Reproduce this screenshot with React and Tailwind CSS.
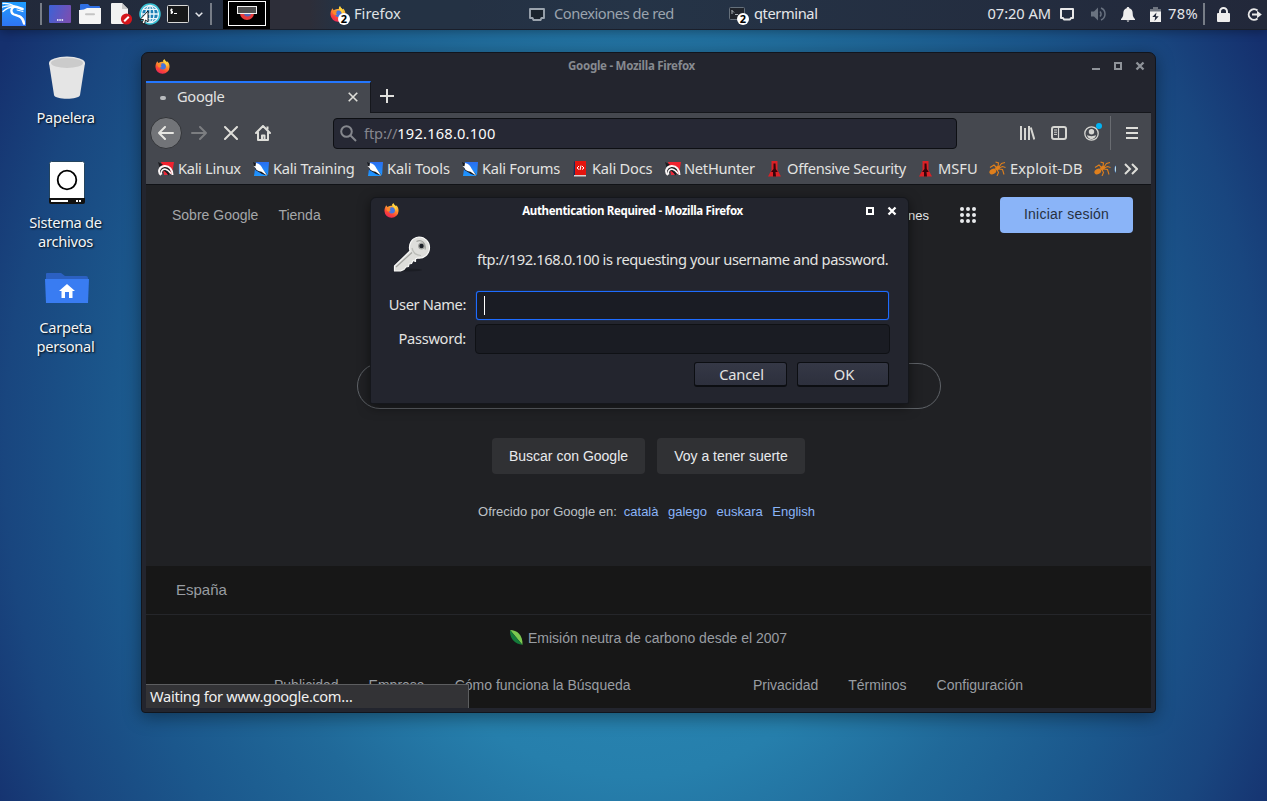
import React from "react";

const ui = "font-['Noto_Sans',sans-serif] text-[14.67px] leading-5 whitespace-nowrap";

function FirefoxIcon({ className }) {
  return (
    <svg viewBox="0 0 16 16" className={`shrink-0 ${className}`}>
      <defs>
        <linearGradient id="fxBody" x1="0.8" y1="0" x2="0.3" y2="1">
          <stop offset="0" stopColor="#ffe04a" />
          <stop offset="0.4" stopColor="#ff9a2e" />
          <stop offset="0.75" stopColor="#fb4238" />
          <stop offset="1" stopColor="#e8275c" />
        </linearGradient>
      </defs>
      <path d="M1.300 4.500 2.300 2.300 3.600 4.200C5 3.400 7 3 9 3 8.600 1.800 9.200.8 10.200.2c.2 1.500 1.700 2 2.500 3.300.4-.1.5-.6.5-1 1.600 1.600 2.400 3.800 2.300 6A7.300 7.300 0 0 1 8 15.700 7.400 7.400 0 0 1 .5 8.800C.4 7 .8 5.500 1.300 4.500z" fill="url(#fxBody)" />
      <path d="M5 6C6 5.500 6.500 4.800 8 4.600c2.300-.3 3.700 1.300 3.700 3.400 0 2-1.500 3.300-3.500 3.200C6 11.200 4.600 9.300 5 6z" fill="#4575df" />
      <path d="M2.600 5.500 7 5.300 6 7.600 7.400 8.400 5.200 9C3.400 8.700 2.600 7.400 2.600 5.500z" fill="#ff8a28" />
      <path d="M10 .2c.3 1.500 1.800 2 2.600 3.500.9 1.700.8 3.500.2 4.900C12 6 10.600 4.600 9 3 8.600 1.800 9.100.8 10 .2z" fill="#ffd53e" />
    </svg>
  );
}

function KaliMenuIcon() {
  return (
    <svg className="ml-[2px] shrink-0" width="24" height="24" viewBox="0 0 24 24">
      <defs>
        <linearGradient id="kaliBg" x1="0" y1="0" x2="0" y2="1">
          <stop offset="0" stopColor="#1f9dff" />
          <stop offset="1" stopColor="#2f74f2" />
        </linearGradient>
      </defs>
      <rect width="24" height="24" fill="url(#kaliBg)" />
      <g fill="none" stroke="#fff" strokeLinecap="round">
        <path d="M1 1.500c4-.2 8 .5 11.500 3" strokeWidth="1.300" />
        <path d="M.5 5c4-1.300 8-1.500 11.500-.5" strokeWidth="1.300" />
        <path d="M1 9.500C4 6.500 8 5 12 5" strokeWidth="1.300" />
        <path d="M12 4.500c3 .3 5.500 1.500 8.500 2.500" strokeWidth="2.600" />
        <path d="M15 8l6 1.500" strokeWidth="1" />
        <path d="M12 5C8.500 6.500 8.500 11 12 12.500c4 1.500 8.500 1.500 10 9" strokeWidth="2.300" />
        <path d="M17 13.500c4 1 5.500 4 5.500 8.500" strokeWidth="1" />
      </g>
    </svg>
  );
}

function WindowButtons({ color, minimize }) {
  return (
    <svg width="54" height="12" viewBox="0 0 54 12" fill="none" stroke={color} strokeWidth="2" shapeRendering="crispEdges">
      {minimize && <path d="M0 9h8" />}
      <path d="M23 3h6v6h-6z" />
      <path d="M44.500 2.500l7 7M51.500 2.500l-7 7" shapeRendering="auto" strokeWidth="2.300" />
    </svg>
  );
}

function Badge() {
  return (
    <span className="absolute top-[7px] left-[8px] flex h-3 w-3 items-center justify-center rounded-full bg-white font-['Noto_Sans',sans-serif] text-[11px] leading-3 font-bold tracking-normal text-black">
      2
    </span>
  );
}

function Separator({ className }) {
  return <span className={`h-[22px] w-[2px] shrink-0 bg-[#777d87] ${className}`} />;
}

function Panel() {
  return (
    <header className={`relative flex h-[30px] items-center border-b border-[#1a1f2b] bg-linear-to-r from-[#22293a] via-[#253447] to-[#22283a] pb-px text-[#e4e6ea] shadow-[0_2px_10px_rgba(0,0,0,.3)] ${ui}`}>
      <KaliMenuIcon />
      <Separator className="ml-[14px]" />
      <svg className="ml-[7px] shrink-0" width="22" height="18" viewBox="0 0 22 18">
        <defs>
          <linearGradient id="desk" x1="0" y1="0" x2="1" y2="0.3">
            <stop offset="0" stopColor="#3c62d6" />
            <stop offset="1" stopColor="#7650b4" />
          </linearGradient>
        </defs>
        <rect width="22" height="18" rx="1" fill="url(#desk)" />
        <path d="M8 15h1.500M10.300 15h1.500M12.600 15h1.500" stroke="#fff" strokeWidth="1.300" />
      </svg>
      <svg className="ml-2 shrink-0" width="22" height="20" viewBox="0 0 22 20">
        <path d="M1 1q0-1 1-1h7l2 2h9q1 0 1 1v4H1z" fill="#2f6fe4" />
        <path d="M0 6q5 .3 8-2h14v15q0 1-1 1H1q-1 0-1-1z" fill="#f4f4f4" />
        <path d="M7 10.300h8" stroke="#c4c4c4" strokeWidth="2" strokeLinecap="round" />
      </svg>
      <svg className="ml-[10px] shrink-0" width="22" height="22" viewBox="0 0 22 22">
        <path d="M0 1q0-1 1-1h10l6 6v14q0 1-1 1H1q-1 0-1-1z" fill="#f2f2f2" />
        <path d="M11 0l6 6h-6z" fill="#c9c9c9" />
        <circle cx="15.500" cy="16" r="5.600" fill="#d4161c" />
        <path d="M13.200 18.300l4.600-4.600" stroke="#fff" strokeWidth="2" />
      </svg>
      <svg className="ml-[6px] shrink-0" width="22" height="22" viewBox="0 0 22 22">
        <circle cx="11" cy="11" r="10" fill="#1c7eb5" stroke="#38c6d8" strokeWidth="1.500" />
        <g fill="none" stroke="#e8f6fa" strokeWidth="1.300">
          <circle cx="11" cy="11" r="8.500" />
          <ellipse cx="11" cy="11" rx="4" ry="8.500" />
          <path d="M11 2v18M2.500 11h17M4 6.300h14M4 15.700h14" />
        </g>
        <path d="M9 8v11l-2.500-2-1 4-2.500-1 1.500-3.500H1z" fill="#fff" stroke="#111" strokeWidth=".9" />
      </svg>
      <svg className="ml-[6px] shrink-0" width="22" height="18" viewBox="0 0 22 18">
        <rect x=".5" y=".5" width="21" height="17" rx="1" fill="#171819" stroke="#d8d8d8" />
        <path d="M5.500 4.500H3.800v1.700h1.700v1.800H3.500M4.600 3.500v5.500M7 8.500h3" stroke="#fff" fill="none" />
      </svg>
      <svg className="ml-[6px] shrink-0" width="8" height="5" viewBox="0 0 8 5" fill="none" stroke="#e4e6ea" strokeWidth="1.500">
        <path d="M.7.700 4 4 7.300.700" />
      </svg>
      <Separator className="ml-[7px]" />
      <span className="ml-[11px] flex h-[29px] w-[47px] shrink-0 items-start justify-center bg-black pt-px">
        <svg width="38" height="25" viewBox="0 0 38 25">
          <rect x=".5" y=".5" width="37" height="24" fill="#000" stroke="#fff" />
          <path d="M12 12h14a7 7 0 0 1-14 0z" fill="#e83b3c" />
          <path d="M16 12h7a3.500 3.500 0 0 1-7 0z" fill="#5665b5" />
          <rect x="9.500" y="5.500" width="19" height="7" fill="#505050" stroke="#f1f1f1" />
        </svg>
      </span>
      <div className="flex h-[29px] w-[200px] shrink-0 items-center bg-linear-to-r from-[#2d2e39] from-20% to-[#243244] to-35% pl-[60px] text-[#dfe2e5]">
        <span className="relative h-4 w-4 shrink-0">
          <FirefoxIcon className="h-4 w-4" />
          <Badge />
        </span>
        <span className="-mt-[2px] ml-2">Firefox</span>
      </div>
      <div className="flex w-[200px] shrink-0 items-center pl-[59px] text-[#9ba4ae]">
        <svg className="shrink-0" width="16" height="13" viewBox="0 0 16 13">
          <path d="M1 1h14v9h-2.500l-1 2h-7l-1-2H1z" fill="#1a232d" stroke="#9ba4ae" strokeWidth="1.900" strokeLinejoin="round" />
        </svg>
        <span className="-mt-[2px] ml-[9px] tracking-[-0.47px]">Conexiones de red</span>
      </div>
      <div className="flex shrink-0 items-center pl-[59px]">
        <span className="relative h-4 w-4 shrink-0">
          <svg width="16" height="13" viewBox="0 0 16 13" className="mt-px">
            <rect x=".5" y=".5" width="15" height="12" rx="1" fill="#20242b" stroke="#66717c" />
            <path d="M3 3v4M3 3.500l2 2M6 7.500h3" stroke="#a9b0b6" fill="none" />
          </svg>
          <Badge />
        </span>
        <span className="-mt-[2px] ml-[9px] tracking-[-0.4px]">qterminal</span>
      </div>
      <div className="ml-auto flex shrink-0 items-center pr-[5px]">
        <span className="-mt-[2px] tracking-[-0.05px]">07:20 AM</span>
        <svg className="ml-[9px]" width="14" height="13" viewBox="0 0 14 13" fill="none" stroke="#e8e8e8" strokeWidth="2" strokeLinejoin="round">
          <path d="M1 1h12v9h-2l-1 1.500H4L3 10H1z" />
        </svg>
        <svg className="ml-[17px]" width="16" height="14" viewBox="0 0 16 14" fill="none" stroke="#697280" strokeWidth="1.500">
          <path d="M0 4.500h3L7 .5v13L3 9.500H0z" fill="#697280" stroke="none" />
          <path d="M9 4.500a3.500 3.500 0 0 1 0 5M10 1a6.500 6.500 0 0 1 0 12" />
        </svg>
        <svg className="ml-[14px]" width="14" height="15" viewBox="0 0 14 15" fill="#eee">
          <path d="M7 0c1 0 1.300.6 1.300 1.300C11 2 11.700 4 11.700 6.500c0 3 .8 4 2.300 5.500v1H0v-1c1.500-1.500 2.300-2.500 2.300-5.500C2.300 4 3 2 5.700 1.300 5.700.6 6 0 7 0zM5.500 13.500h3L7 15z" />
        </svg>
        <svg className="ml-[14px]" width="13" height="15" viewBox="0 0 13 15">
          <path d="M1 2h3V0h5v2h3v4H1z" fill="#6f7580" />
          <path d="M1 4.500h11V15H1z" fill="#f0f0f0" />
          <path d="M7.500 5.500 3.300 10h2.900L5.500 14l4.200-4.700H6.800z" fill="#22293a" />
        </svg>
        <span className="-mt-[2px] ml-[6px] tracking-[0.35px]">78%</span>
        <Separator className="ml-[5px]" />
        <svg className="ml-[12px]" width="13" height="15" viewBox="0 0 13 15">
          <path d="M3 7V4.500a3.500 3.500 0 0 1 7 0V7" fill="none" stroke="#eee" strokeWidth="2" />
          <rect y="6" width="13" height="9" rx="1" fill="#eee" />
        </svg>
        <svg className="ml-[17px]" width="15" height="13" viewBox="0 0 15 13" fill="none" stroke="#e8e8e8" strokeWidth="2">
          <path d="M10.500 2.500A5.300 5.300 0 1 0 10.500 10.500M5 6.500h6" />
          <path d="M10 2.800 14.800 6.500 10 10.200z" fill="#e8e8e8" stroke="none" />
        </svg>
      </div>
    </header>
  );
}

function DesktopIcon({ className, children, label }) {
  return (
    <div className={`absolute left-[15px] flex w-[101px] flex-col items-center text-center tracking-[-0.27px] text-[#f3f6f8] [text-shadow:1px_1px_2px_rgba(0,0,0,.9)] ${ui} ${className}`}>
      {children}
      <span className="mt-[9px] leading-[19px] whitespace-pre-line">{label}</span>
    </div>
  );
}

function KaliMark({ red }) {
  return red ? (
    <svg width="16" height="14" viewBox="0 0 16 14">
      <path d="M3 0h13l-2 12H6z" fill="#f0222f" />
      <path d="M0 0l5 2.500L1.500 5z" fill="#1c1c20" />
      <path d="M2.500 8.500C3 5 7.500 3.500 10.500 5.500c3 2 2.500 6-.5 8-.8-2.200-2.300-3.700-4.500-4.500L3 13.500C.8 12.500 0 10.500 2.500 8.500z" fill="#1c1c20" />
      <path d="M6 9l4 4H6z" fill="#e8283a" />
      <path d="M3 13C-.5 10 1 4.500 6.500 4c5-.3 8 3.500 8 9" fill="none" stroke="#faf6f6" strokeWidth="2" />
      <path d="M3.500 12.500C2.500 9 4.500 6.800 7.500 7.200c2.500.4 4 2.300 5.500 4.300" fill="none" stroke="#faf6f6" strokeWidth="1.600" />
    </svg>
  ) : (
    <svg width="16" height="14" viewBox="0 0 16 14">
      <defs>
        <linearGradient id="kaliBlue" x1="0" y1="0" x2="0" y2="1">
          <stop offset="0" stopColor="#2a6ff0" />
          <stop offset="1" stopColor="#1d97ff" />
        </linearGradient>
      </defs>
      <path d="M3 0h13l-1 14H1z" fill="url(#kaliBlue)" />
      <path d="M0 0l5 2.500 5 5.500 5.500 6L9 12 2.500 8z" fill="#15171d" />
      <path d="M3 1c3.500.8 5.500 3 6.500 5.500L14.500 14 8.500 9.800C5.500 9.500 3 8 2.500 6L.5 4l2 .3z" fill="#fff" />
    </svg>
  );
}

function DocsMark() {
  return (
    <svg width="13" height="16" viewBox="0 0 13 16">
      <path d="M1 .500h3V15H.500z" fill="#172b5b" />
      <rect x="2" width="11" height="14" fill="#e3140e" />
      <path d="M1 14h12v1.500H1z" fill="#d8d0d0" />
      <path d="M6 5 4 7l2 1.500M9 5l2 2-2 1.500M8 4.500 7 9" stroke="#fff" fill="none" />
    </svg>
  );
}

function OffsecMark() {
  return (
    <svg width="13" height="16" viewBox="0 0 13 16">
      <path d="M3.500 0h6v9l3.500 6.500H0L3.500 9z" fill="#dc2026" />
      <path d="M5.500 2.500h2L7.800 8l2 3H7.500L8 15.500H5V11H3l2.500-3z" fill="#35040a" />
    </svg>
  );
}

function AntMark() {
  return (
    <svg width="17" height="15" viewBox="0 0 17 15" fill="none" stroke="#df7f1c" strokeWidth="1.100">
      <ellipse cx="3.800" cy="10.500" rx="3.600" ry="2.600" fill="#df7f1c" stroke="none" transform="rotate(-30 3.800 10.500)" />
      <ellipse cx="8.500" cy="7" rx="2.600" ry="1.900" fill="#df7f1c" stroke="none" transform="rotate(-30 8.500 7)" />
      <path d="M7 6 5 4 1 6.500M9 5.500 9.500 2 6.500 1M10 6l2.500-3.500L16 1.500M10 7l3.500-1.500 3 1M9.500 8l4 .500 1.500 5M8 8.500l1.500 3L8 15" />
    </svg>
  );
}

const bookmarks = [
  { label: "Kali Linux", icon: <KaliMark red />, box: "w-[95px]", slot: "w-[20px]", track: "tracking-[-0.32px]" },
  { label: "Kali Training", icon: <KaliMark />, box: "w-[114px]", slot: "w-[20px]", track: "tracking-[-0.25px]" },
  { label: "Kali Tools", icon: <KaliMark />, box: "w-[95px]", slot: "w-[20px]", track: "tracking-[-0.15px]" },
  { label: "Kali Forums", icon: <KaliMark />, box: "w-[111px]", slot: "w-[20px]", track: "tracking-[-0.27px]" },
  { label: "Kali Docs", icon: <DocsMark />, box: "w-[92px]", slot: "w-[19px]", track: "tracking-[-0.22px]" },
  { label: "NetHunter", icon: <KaliMark red />, box: "w-[103px]", slot: "w-[19px]", track: "tracking-[-0.27px]" },
  { label: "Offensive Security", icon: <OffsecMark />, box: "w-[151px]", slot: "w-[19px]", track: "tracking-[-0.29px]" },
  { label: "MSFU", icon: <OffsecMark />, box: "w-[70px]", slot: "w-[19px]", track: "tracking-normal" },
  { label: "Exploit-DB", icon: <AntMark />, box: "w-[105px]", slot: "w-[21px]", track: "tracking-[0.1px]" },
  { label: "GHDB", icon: <AntMark />, box: "w-[22px]", slot: "w-[20px]", track: "tracking-normal" },
];

function BrowserChrome() {
  return (
    <>
      <div className="flex h-[28px] items-center pr-[9px] pb-[2px] pl-[13px]">
        <FirefoxIcon className="h-[15px] w-[15px]" />
        <span className="w-[923px] text-center font-['Noto_Sans',sans-serif] text-[11.5px] leading-4 font-bold tracking-[-0.26px] text-[#868a90]">
          Google - Mozilla Firefox
        </span>
        <span className="-ml-5 grow" />
        <WindowButtons color="#8f9399" minimize />
      </div>
      <div className="mx-[4px] flex h-[32px] border-b border-[#15171c]">
        <div className={`-mb-px flex h-[32px] w-[225px] items-center border-t-2 border-r border-t-[#2477ff] border-r-[#15171c] bg-[#45484f] pb-px pl-[14px] text-[#e2e2e2] ${ui}`}>
          <span className="h-1 w-[6px] rounded-full bg-[#b9bbbe]" />
          <span className="-mt-[3px] ml-[11px] tracking-[-0.33px]">Google</span>
          <svg className="-mt-px mr-[12px] ml-auto" width="10" height="10" viewBox="0 0 11 11" stroke="#deded9" strokeWidth="1.800">
            <path d="M.8.800l9.400 9.400M10.200.800.800 10.200" />
          </svg>
        </div>
        <svg className="mt-[8px] ml-[9px]" width="14" height="14" viewBox="0 0 14 14" stroke="#e0e0dd" strokeWidth="2">
          <path d="M7 0v14M0 7h14" />
        </svg>
      </div>
      <div className="mx-[4px] flex h-[72px] flex-col border-b border-[#101216] bg-[#45484f]">
        <div className="flex h-[40px] items-center pl-[4px]">
          <span className="flex h-8 w-8 items-center justify-center rounded-full border border-[#333539] bg-[#727478]">
            <svg width="16" height="14" viewBox="0 0 16 14" fill="none" stroke="#e6e6e2" strokeWidth="2" strokeLinecap="round" strokeLinejoin="round">
              <path d="M15 7H1M7 1 1 7l6 6" />
            </svg>
          </span>
          <svg className="ml-[9px]" width="16" height="14" viewBox="0 0 16 14" fill="none" stroke="#7c7e81" strokeWidth="2" strokeLinecap="round" strokeLinejoin="round">
            <path d="M1 7h14M9 1l6 6-6 6" />
          </svg>
          <svg className="ml-[17px]" width="14" height="14" viewBox="0 0 14 14" stroke="#deded9" strokeWidth="2" strokeLinecap="round">
            <path d="M1 1l12 12M13 1 1 13" />
          </svg>
          <svg className="ml-[17px]" width="16" height="16" viewBox="0 0 16 16" fill="none" stroke="#deded9" strokeWidth="2" strokeLinejoin="round">
            <path d="M1 8l7-7 7 7M3 7.500V15h10V7.500M7 15v-4.500h2.500V15" strokeLinecap="round" />
            <path d="M12.500 1.500v3" />
          </svg>
          <div className={`ml-[62px] flex h-[31px] w-[624px] items-center rounded-[4px] border border-[#0d0f13] bg-[#262834] pl-[6px] text-[#fbfbfb] ${ui}`}>
            <svg width="17" height="17" viewBox="0 0 17 17" fill="none" stroke="#85878d" strokeWidth="2">
              <circle cx="6.500" cy="6.500" r="5.300" />
              <path d="M10.500 10.500l5.500 5.500" />
            </svg>
            <span className="ml-[7px] tracking-[0.2px]"><span className="tracking-[-0.15px] text-[#85868e]">ftp://</span>192.168.0.100</span>
          </div>
          <svg className="ml-[63px]" width="15" height="14" viewBox="0 0 15 14" fill="none" stroke="#d6d6d2" strokeWidth="2">
            <path d="M1 0v14M5 2v12M9 0v14" />
            <path d="M10.800 1.500 14.300 13.500" />
          </svg>
          <svg className="ml-[16px]" width="16" height="14" viewBox="0 0 16 14" fill="none" stroke="#d6d6d2" strokeWidth="2">
            <rect x="1" y="1" width="14" height="12" rx="2" />
            <path d="M7.500 1v12" strokeWidth="1.200" />
            <path d="M3 4h3M3 6.200h3M3 8.400h3" strokeWidth="1" />
          </svg>
          <span className="relative ml-[17px]">
            <svg width="15" height="15" viewBox="0 0 15 15">
              <circle cx="7.500" cy="7.500" r="6.700" fill="none" stroke="#d6d6d2" strokeWidth="1.300" />
              <circle cx="7.500" cy="5.800" r="2.700" fill="#d6d6d2" />
              <path d="M3.200 9c1.500 1.500 7 1.500 8.600 0 .3 2-2 4-4.300 4S3 11 3.200 9z" fill="#d6d6d2" />
            </svg>
            <span className="absolute top-[-3px] left-[12px] h-[6px] w-[6px] rounded-full bg-[#00b3f4]" />
          </span>
          <span className="ml-[11px] h-[34px] w-px bg-[#696c71]" />
          <svg className="ml-[15px]" width="12" height="12" viewBox="0 0 12 12" stroke="#dededa" strokeWidth="2">
            <path d="M0 1h12M0 6h12M0 11h12" />
          </svg>
        </div>
        <div className={`flex h-[31px] items-center pl-[12px] text-[#e3e3e1] ${ui}`}>
          {bookmarks.map((b) => (
            <span key={b.label} className={`flex shrink-0 items-center overflow-hidden ${b.box} ${b.track}`}>
              <span className={`flex shrink-0 ${b.slot}`}>{b.icon}</span>
              <span className="-mt-px">{b.label}</span>
            </span>
          ))}
          <svg className="ml-[8px]" width="14" height="12" viewBox="0 0 14 12" fill="none" stroke="#deded9" strokeWidth="2">
            <path d="M1 1l5 5-5 5M8 1l5 5-5 5" />
          </svg>
        </div>
      </div>
    </>
  );
}

const arial = "font-['Liberation_Sans',Arial,sans-serif] whitespace-nowrap";

function GooglePage() {
  return (
    <main className={`relative mx-[4px] flex h-[523px] flex-col overflow-hidden bg-[#202124] text-[14px] leading-4 text-[#e8eaed] ${arial}`}>
      <nav className="flex h-[60px] items-center pr-[18px] pl-[26px]">
        <span className="text-[#a5a7aa]">Sobre Google</span>
        <span className="ml-5 text-[#a5a7aa]">Tienda</span>
        <span className="mt-px ml-auto text-[13px]">Imágenes</span>
        <svg className="ml-[31px]" width="16" height="16" viewBox="0 0 16 16" fill="#e8eaed">
          {[2, 8, 14].map((y) => [2, 8, 14].map((x) => <circle key={`${x}-${y}`} cx={x} cy={y} r="2" />))}
        </svg>
        <span className="ml-6 flex h-9 w-[133px] items-center justify-center rounded-[4px] bg-[#8ab4f8] pb-[2px] tracking-[0.25px] text-[#27303f]">
          Iniciar sesión
        </span>
      </nav>
      <div className="mt-[118px] h-[46px] w-[584px] self-center rounded-full border border-[#5f6368]" />
      <div className="mt-[29px] flex justify-center gap-3">
        <button className="h-9 w-[153px] rounded-[4px] bg-[#303134]">Buscar con Google</button>
        <button className="h-9 w-[148px] rounded-[4px] bg-[#303134]">Voy a tener suerte</button>
      </div>
      <div className="mt-[30px] flex justify-center pr-[4px] text-[13px] text-[#bdc1c6]">
        <span>Ofrecido por Google en:</span>
        <span className="ml-[7px] flex gap-[9.5px] text-[#8ab4f8]">
          <span>català</span>
          <span>galego</span>
          <span>euskara</span>
          <span>English</span>
        </span>
      </div>
      <footer className="mt-auto flex h-[142px] flex-col bg-[#171717] text-[#999da2]">
        <div className="flex h-[49px] items-center border-b border-[#25262a] pl-[30px] text-[15px]">España</div>
        <div className="flex h-[47px] items-center justify-center pb-[2px]">
          <svg width="13" height="15" viewBox="0 0 13 15">
            <path d="M0 0c7 0 13 5 12.500 15z" fill="#7bc850" />
            <path d="M0 0c-.5 8 4 14 12.500 15z" fill="#147a3a" />
          </svg>
          <span className="ml-[5px]">Emisión neutra de carbono desde el 2007</span>
        </div>
        <div className="flex h-[46px] items-center pl-[128px]">
          <span>Publicidad</span>
          <span className="ml-[30px]">Empresa</span>
          <span className="ml-[30px]">Cómo funciona la Búsqueda</span>
          <span className="ml-auto">Privacidad</span>
          <span className="ml-[30px]">Términos</span>
          <span className="mr-[128px] ml-[30px]">Configuración</span>
        </div>
      </footer>
      <div className={`absolute bottom-0 left-0 h-[24px] w-[323px] border-t border-r border-[#5d5e60] bg-[#333336] pt-px pl-[4px] tracking-[-0.31px] text-[#f0f0f0] ${ui}`}>
        Waiting for www.google.com…
      </div>
    </main>
  );
}

function KeyIcon() {
  return (
    <svg width="40" height="36" viewBox="0 0 40 36">
      <ellipse cx="16" cy="34" rx="14" ry="1.500" fill="#1b1d24" />
      <path d="M2.500 30 18 15c-2-7 2-13.500 9-14 6 0 10.500 5 10.500 10.500 0 7-6 11.500-12 10.500l-2 1v2.500l-2.500-1-1.500 3-2.500.5-.5 2.500-2.500.5L12 33.500 8.500 35h-6z" fill="#dededb" stroke="#fafaf8" strokeWidth="1.200" strokeLinejoin="round" />
      <path d="M4 31 20 16.500M24.500 5.500c5-3 10 2 8.500 8" stroke="#a2a39f" strokeWidth="1.200" fill="none" />
      <path d="M20 12c1 4.500 4 7.500 9 7.500" stroke="#bcbdb9" strokeWidth="1.200" fill="none" />
      <circle cx="29.500" cy="10" r="2.800" fill="#1d2028" stroke="#a2a39f" strokeWidth="1.200" />
    </svg>
  );
}

function AuthDialog() {
  const button = "flex h-[25px] items-center justify-center rounded-[3px] border border-[#0c0e12] border-b-2 bg-linear-to-b from-[#353846] to-[#2d303d]";
  return (
    <div role="dialog" className={`absolute top-[197px] left-[370px] flex h-[207px] w-[539px] flex-col rounded-t-[6px] rounded-b-[2px] border border-[#15171c] bg-[#23252e] text-[#e4e4e2] shadow-[0_3px_12px_rgba(0,0,0,.5)] ${ui}`}>
      <div className="flex h-[26px] items-center pr-[10px] pb-px pl-[13px]">
        <FirefoxIcon className="h-[15px] w-[15px]" />
        <span className="w-[471px] text-center font-['Noto_Sans',sans-serif] text-[11.5px] leading-4 font-bold tracking-[-0.33px] text-white">
          Authentication Required - Mozilla Firefox
        </span>
        <span className="-ml-[22px]">
          <WindowButtons color="#ffffff" />
        </span>
      </div>
      <div className="flex h-[67px] pl-[21px]">
        <span className="mt-[12px]">
          <KeyIcon />
        </span>
        <span className="mt-[25px] ml-[45px] tracking-[-0.4px]">ftp://192.168.0.100 is requesting your username and password.</span>
      </div>
      <div className="grid grid-cols-[95px_415px] items-center gap-x-[9px] pr-[18px]">
        <span className="-mt-[3px] text-right tracking-[-0.38px]">User Name:</span>
        <div className="mx-px flex h-[29px] items-center rounded-[3px] border border-[#1e6cff] bg-[#1a1c24] pl-[7px] shadow-[0_0_1px_#1e6cff]">
          <span className="h-[19px] w-px bg-white" />
        </div>
        <span className="mt-[2px] text-right tracking-[-0.3px]">Password:</span>
        <div className="mt-[4px] h-[30px] rounded-[4px] border border-[#0f1115] bg-[#1a1c23]" />
      </div>
      <div className="mt-[8px] flex justify-end gap-[10px] pr-[19px]">
        <button className={`w-[93px] pl-[2px] tracking-[-0.2px] ${button}`}>Cancel</button>
        <button className={`w-[92px] pl-[2px] ${button}`}>OK</button>
      </div>
    </div>
  );
}

export default function App() {
  return (
    <div className="relative h-[801px] w-[1267px] overflow-hidden bg-[radial-gradient(ellipse_740px_860px_at_634px_450px,#2b8cb9_0%,#267fac_38%,#206999_54%,#1b578c_71%,#19467f_85%,#15306e_97%)]">
      <Panel />
      <DesktopIcon className="top-[56px]" label="Papelera">
        <svg width="38" height="43" viewBox="0 0 38 43" className="ml-[3px]">
          <path d="M1 7h36l-5 32c-1 5-25 5-26 0z" fill="#e5e5e5" />
          <ellipse cx="19" cy="7" rx="18" ry="6.500" fill="#e5e5e5" />
          <ellipse cx="19" cy="7" rx="16" ry="5" fill="#cbcbcb" />
        </svg>
      </DesktopIcon>
      <DesktopIcon className="top-[161px]" label={"Sistema de\narchivos"}>
        <svg width="36" height="43" viewBox="0 0 36 43" className="ml-[3px]">
          <rect x=".5" y=".5" width="35" height="42" rx="2" fill="#fff" stroke="#24445e" />
          <circle cx="18" cy="19" r="9.300" fill="none" stroke="#000" strokeWidth="1.800" />
          <path d="M0 37h36v4q0 2-2 2H2q-2 0-2-2z" fill="#111" />
          <path d="M2 40h17M27 40h2M30 40h2" stroke="#fff" strokeWidth="2" />
        </svg>
      </DesktopIcon>
      <DesktopIcon className="top-[273px]" label={"Carpeta\npersonal"}>
        <svg width="44" height="36" viewBox="0 0 44 36" className="ml-[3px]">
          <path d="M1 1q0-1 1-1h14l4 3h21q2 0 2 2v8H1z" fill="#2b60c2" />
          <path d="M0 6h44l-1 24H1z" fill="#397cf2" />
          <path d="M22 11l8 7h-2.500v7H24v-6h-4v6h-3.500v-7H14z" fill="#fff" />
        </svg>
      </DesktopIcon>
      <div className="absolute top-[52px] left-[141px] flex h-[661px] w-[1015px] flex-col rounded-t-[7px] rounded-b-[4px] border border-[#11151d] bg-[#23252e] shadow-[0_4px_18px_rgba(0,0,0,.4)]">
        <BrowserChrome />
        <GooglePage />
      </div>
      <AuthDialog />
    </div>
  );
}
